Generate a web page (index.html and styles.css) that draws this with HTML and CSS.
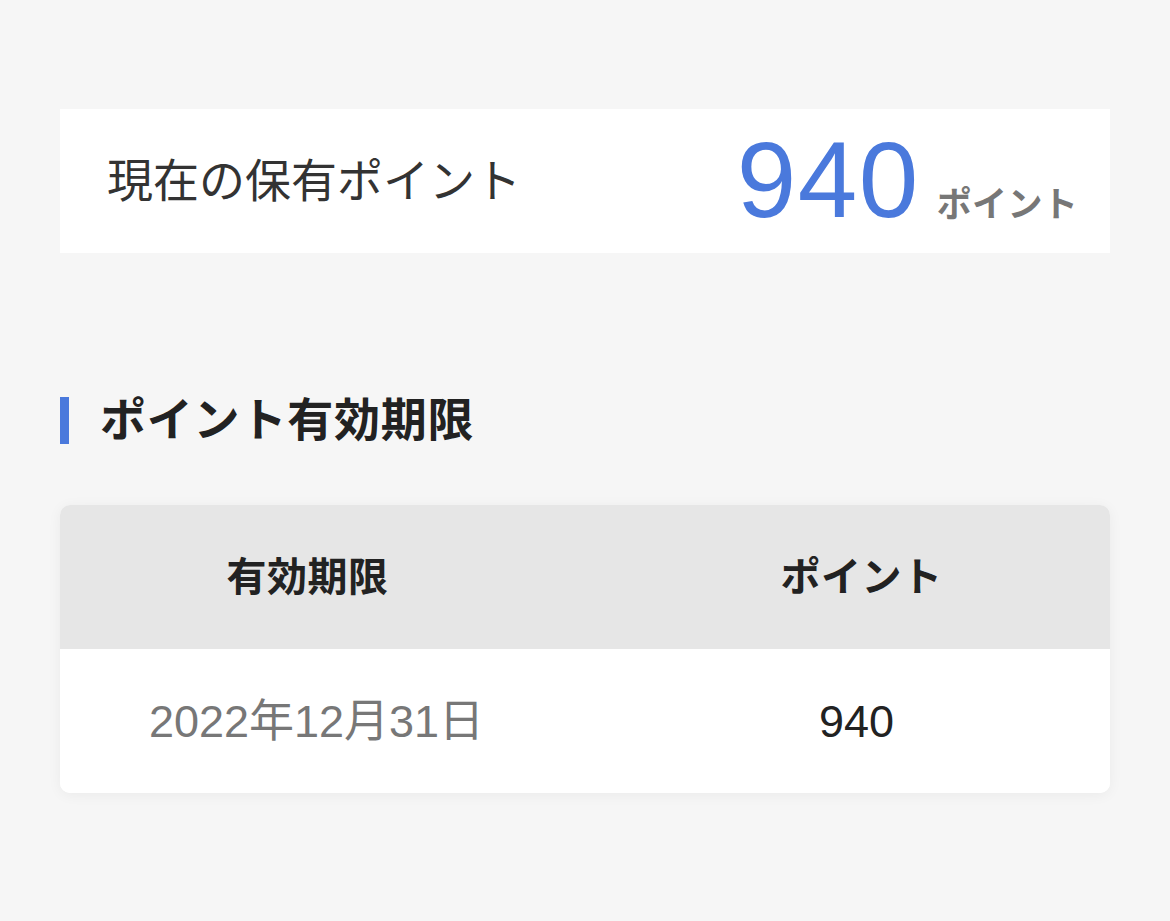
FILE: index.html
```html
<!DOCTYPE html>
<html lang="ja">
<head>
<meta charset="utf-8">
<title>ポイント</title>
<link rel="stylesheet" href="styles.css">
</head>
<body>
<main class="page">
  <section class="summary">
    <p class="summary-label">現在の保有ポイント</p>
    <p class="summary-value"><span class="summary-number">940</span><span class="summary-unit">ポイント</span></p>
  </section>

  <h2 class="section-title">ポイント有効期限</h2>

  <div class="expiry-table">
    <div class="row row-head">
      <div class="cell cell-date">有効期限</div>
      <div class="cell cell-points">ポイント</div>
    </div>
    <div class="row row-body">
      <div class="cell cell-date">2022年12月31日</div>
      <div class="cell cell-points">940</div>
    </div>
  </div>
</main>
</body>
</html>
```

FILE: styles.css
```css
* {
  box-sizing: border-box;
}

html, body {
  margin: 0;
  padding: 0;
}

body {
  background: #f6f6f6;
  font-family: "Liberation Sans", "Noto Sans CJK JP", sans-serif;
  color: #222;
  width: 1170px;
  height: 921px;
  overflow: hidden;
}

.page {
  padding: 109px 60px 0;
}

/* Current balance card */
.summary {
  height: 144px;
  background: #fff;
  display: flex;
  align-items: center;
  justify-content: space-between;
  padding: 0 32px 0 47px;
}

.summary-label {
  margin: 0;
  font-size: 46px;
  color: #333;
  line-height: 1;
}

.summary-value {
  margin: 0;
  display: flex;
  align-items: baseline;
  gap: 17px;
  line-height: 1;
  position: relative;
  top: -1px;
}

.summary-number {
  font-size: 107px;
  color: #4a79dc;
  letter-spacing: 1.5px;
}

.summary-unit {
  font-size: 35px;
  font-weight: 700;
  color: #777;
  letter-spacing: 0.3px;
}

/* Section heading with accent bar */
.section-title {
  margin: 144px 0 0;
  display: flex;
  align-items: center;
  gap: 31px;
  font-size: 46px;
  font-weight: 700;
  line-height: 47px;
  letter-spacing: 0.8px;
  color: #222;
}

.section-title::before {
  content: "";
  width: 9px;
  height: 47px;
  background: #4a79dc;
  flex: none;
}

/* Expiry table */
.expiry-table {
  margin-top: 61px;
  background: #fff;
  border-radius: 10px;
  overflow: hidden;
  box-shadow: 0 2px 14px rgba(0, 0, 0, 0.05);
}

.row {
  display: grid;
  grid-template-columns: 1fr 1fr;
  height: 144px;
  align-items: center;
}

.row-head {
  background: #e6e6e6;
  font-size: 40px;
  font-weight: 700;
  letter-spacing: 0.5px;
  color: #222;
}

.row-body {
  font-size: 45px;
  background: #fff;
}

.cell {
  text-align: center;
  line-height: 1;
}

.cell-date {
  padding-right: 30px;
}

.cell-points {
  padding-left: 28px;
}

.row-body .cell-date {
  color: #777;
  padding-right: 12px;
}

.row-body .cell-points {
  color: #222;
  padding-left: 18px;
}
```
